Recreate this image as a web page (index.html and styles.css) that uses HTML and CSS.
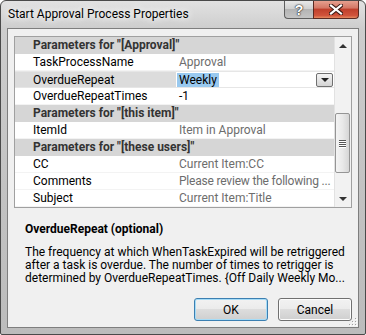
FILE: index.html
```html
<!DOCTYPE html>
<html lang="en">
<head>
  <meta charset="UTF-8" />
  <title>Start Approval Process Properties</title>
  <link rel="stylesheet" href="styles.css">
</head>
<body>
  <div class="window">
    <div class="titlebar">
      <span class="title">Start Approval Process Properties</span>
      <div class="caption-buttons">
        <button class="cap help">?</button>
        <button class="cap close">
          <svg width="14" height="11" viewBox="0 0 14 11">
            <path d="M2 1.5 L12 9.5 M12 1.5 L2 9.5" stroke="#3a1a14" stroke-width="4.2" stroke-linecap="square"/>
            <path d="M2 1.5 L12 9.5 M12 1.5 L2 9.5" stroke="#fff" stroke-width="2.2" stroke-linecap="square"/>
          </svg>
        </button>
      </div>
    </div>

    <div class="client">
      <div class="grid">
        <div class="rows">
          <div class="row cat">Parameters for "[Approval]"</div>
          <div class="row"><span class="name">TaskProcessName</span><span class="value muted">Approval</span></div>
          <div class="row selected">
            <span class="name">OverdueRepeat</span>
            <span class="value"><span class="sel">Weekly</span><span class="drop"></span></span>
          </div>
          <div class="row"><span class="name">OverdueRepeatTimes</span><span class="value">-1</span></div>
          <div class="row cat">Parameters for "[this item]"</div>
          <div class="row"><span class="name">ItemId</span><span class="value muted">Item in Approval</span></div>
          <div class="row cat">Parameters for "[these users]"</div>
          <div class="row"><span class="name">CC</span><span class="value muted">Current Item:CC</span></div>
          <div class="row"><span class="name">Comments</span><span class="value muted tight">Please review the following ...</span></div>
          <div class="row"><span class="name">Subject</span><span class="value muted">Current Item:Title</span></div>
        </div>
        <div class="scrollbar">
          <div class="arrow up"></div>
          <div class="track">
            <div class="thumb"><span></span><span></span><span></span><span></span></div>
          </div>
          <div class="arrow down"></div>
        </div>
      </div>

      <div class="desc">
        <div class="desc-title">OverdueRepeat (optional)</div>
        <p>The frequency at which WhenTaskExpired will be retriggered<br>
        after a task is overdue. The number of times to retrigger is<br>
        determined by OverdueRepeatTimes. {Off Daily Weekly Mo...</p>
      </div>

      <div class="buttons">
        <button class="btn default">OK</button>
        <button class="btn">Cancel</button>
      </div>

      <svg class="grip" width="8" height="8" viewBox="0 0 8 8">
        <rect x="6" y="0" width="1" height="1" fill="#a0a0a0"/>
        <rect x="3" y="3" width="1" height="1" fill="#a0a0a0"/>
        <rect x="6" y="3" width="1" height="1" fill="#a0a0a0"/>
        <rect x="0" y="6" width="1" height="1" fill="#a0a0a0"/>
        <rect x="3" y="6" width="1" height="1" fill="#a0a0a0"/>
        <rect x="6" y="6" width="1" height="1" fill="#a0a0a0"/>
        <rect x="7" y="1" width="1" height="1" fill="#fff"/>
        <rect x="4" y="4" width="1" height="1" fill="#fff"/>
        <rect x="7" y="4" width="1" height="1" fill="#fff"/>
        <rect x="1" y="7" width="1" height="1" fill="#fff"/>
        <rect x="4" y="7" width="1" height="1" fill="#fff"/>
        <rect x="7" y="7" width="1" height="1" fill="#fff"/>
      </svg>
    </div>
  </div>
</body>
</html>
```

FILE: styles.css
```css
body {
  margin: 0;
  background: #fff;
  font-family: "Segoe UI", Roboto, "Liberation Sans", sans-serif;
  font-size: 12px;
  color: #000;
}

.window {
  box-sizing: border-box;
  width: 366px;
  height: 335px;
  border: 1px solid #4a4a4a;
  border-radius: 6px 6px 2px 2px;
  background: linear-gradient(#e2e2e2, #cdcdcd 28px, #c2c2c2 60%, #bcbcbc);
  padding: 0 6px 6px 6px;
  display: flex;
  flex-direction: column;
}

.titlebar {
  height: 27px;
  display: flex;
  align-items: flex-start;
}

.title {
  padding: 6px 0 0 1px;
  line-height: 15px;
  text-shadow: 0 0 6px #fff, 0 0 10px #fff;
}

.caption-buttons {
  margin-left: auto;
  display: flex;
}

.cap {
  height: 18px;
  margin: 0;
  padding: 0;
  border: 1px solid #5e5e5e;
  border-top: none;
  display: flex;
  align-items: center;
  justify-content: center;
}

.help {
  width: 29px;
  border-radius: 0 0 0 4px;
  border-right: none;
  background: linear-gradient(#e8e8e8, #d0d0d0 45%, #b4b4b4 50%, #c4c4c4);
  color: #fff;
  font: bold 14px "Liberation Sans", sans-serif;
  text-shadow: 0 0 1px #333, 0 0 1px #333, 0 0 2px #333;
}

.close {
  width: 46px;
  border-radius: 0 0 4px 0;
  border-color: #5a2a22;
  background: linear-gradient(#e6a08f, #d47866 40%, #c0402c 50%, #d0533b 85%, #e58a60);
}

.client {
  position: relative;
  flex: 1;
  background: #f0f0f0;
  border: 1px solid #7e7e7e;
  padding: 7px 6px 6px 6px;
  display: flex;
  flex-direction: column;
}

.grid {
  height: 170px;
  border: 1px solid #a0a0a0;
  background: #fff;
  display: flex;
}

.rows {
  flex: 1;
  overflow: hidden;
}

.row {
  height: 17px;
  display: flex;
  align-items: center;
  white-space: nowrap;
  box-sizing: border-box;
  border-bottom: 1px solid #f3f3f3;
}

.row.cat {
  background: #d6d6d6;
  border-bottom-color: #d6d6d6;
  padding-left: 18px;
  font-weight: bold;
  color: #333;
}

.name {
  width: 143px;
  padding-left: 18px;
  height: 100%;
  display: flex;
  align-items: center;
}

.value {
  flex: 1;
  min-width: 0;
  height: 100%;
  padding-left: 3px;
  display: flex;
  align-items: center;
}

.value.muted {
  color: #6d6d6d;
}

.value.tight {
  letter-spacing: -0.2px;
}

.row.selected {
  border-top: 1px solid #e6e6e6;
  border-bottom-color: #e6e6e6;
}

.row.selected .name {
  background: #dcdcdc;
}

.sel {
  background: #99c9ef;
  padding: 0 2px;
  margin-left: -2px;
  line-height: 14px;
}

.drop {
  margin-left: auto;
  margin-right: 1px;
  width: 15px;
  height: 12px;
  border: 1px solid #707070;
  border-radius: 2px;
  background: linear-gradient(#f4f4f4, #e4e4e4 50%, #d4d4d4);
  position: relative;
}

.drop::after {
  content: "";
  position: absolute;
  left: 4px;
  top: 4px;
  border-left: 4px solid transparent;
  border-right: 4px solid transparent;
  border-top: 4px solid #222;
}

.scrollbar {
  width: 17px;
  background: #f2f2f2;
  border-left: 1px solid #e2e2e2;
  box-sizing: border-box;
  display: flex;
  flex-direction: column;
}

.arrow {
  height: 17px;
  display: flex;
  align-items: center;
  justify-content: center;
}

.arrow::after {
  content: "";
  border-left: 4px solid transparent;
  border-right: 4px solid transparent;
}

.arrow.up::after {
  border-bottom: 4px solid #333;
}

.arrow.down::after {
  border-top: 4px solid #333;
}

.track {
  flex: 1;
  padding-top: 59px;
}

.thumb {
  box-sizing: border-box;
  height: 60px;
  width: 15px;
  border: 1px solid #959595;
  border-radius: 2px;
  background: linear-gradient(to right, #f4f4f4, #e9e9e9 50%, #d6d6d6);
  display: flex;
  flex-direction: column;
  justify-content: center;
  align-items: center;
  gap: 1px;
}

.thumb span {
  width: 7px;
  height: 1px;
  background: #555;
  box-shadow: 0 1px 0 #fff;
}

.desc {
  flex: 1;
  padding: 13px 0 0 11px;
}

.desc-title {
  font-weight: bold;
  line-height: 16px;
}

.desc p {
  margin: 9px 0 0 0;
  line-height: 13px;
}

.buttons {
  display: flex;
  justify-content: flex-end;
  gap: 10px;
}

.btn {
  width: 74px;
  height: 23px;
  margin: 0;
  font-family: inherit;
  font-size: 12px;
  color: #000;
  border: 1px solid #707070;
  border-radius: 3px;
  background: linear-gradient(#f2f2f2, #ebebeb 50%, #dddddd 50%, #cfcfcf);
  box-shadow: inset 0 0 0 1px #fcfcfc;
}

.btn.default {
  border-color: #3c7fb1;
  box-shadow: inset 0 0 0 1px #a6dcf7;
}

.grip {
  position: absolute;
  right: 1px;
  bottom: 1px;
}
```
